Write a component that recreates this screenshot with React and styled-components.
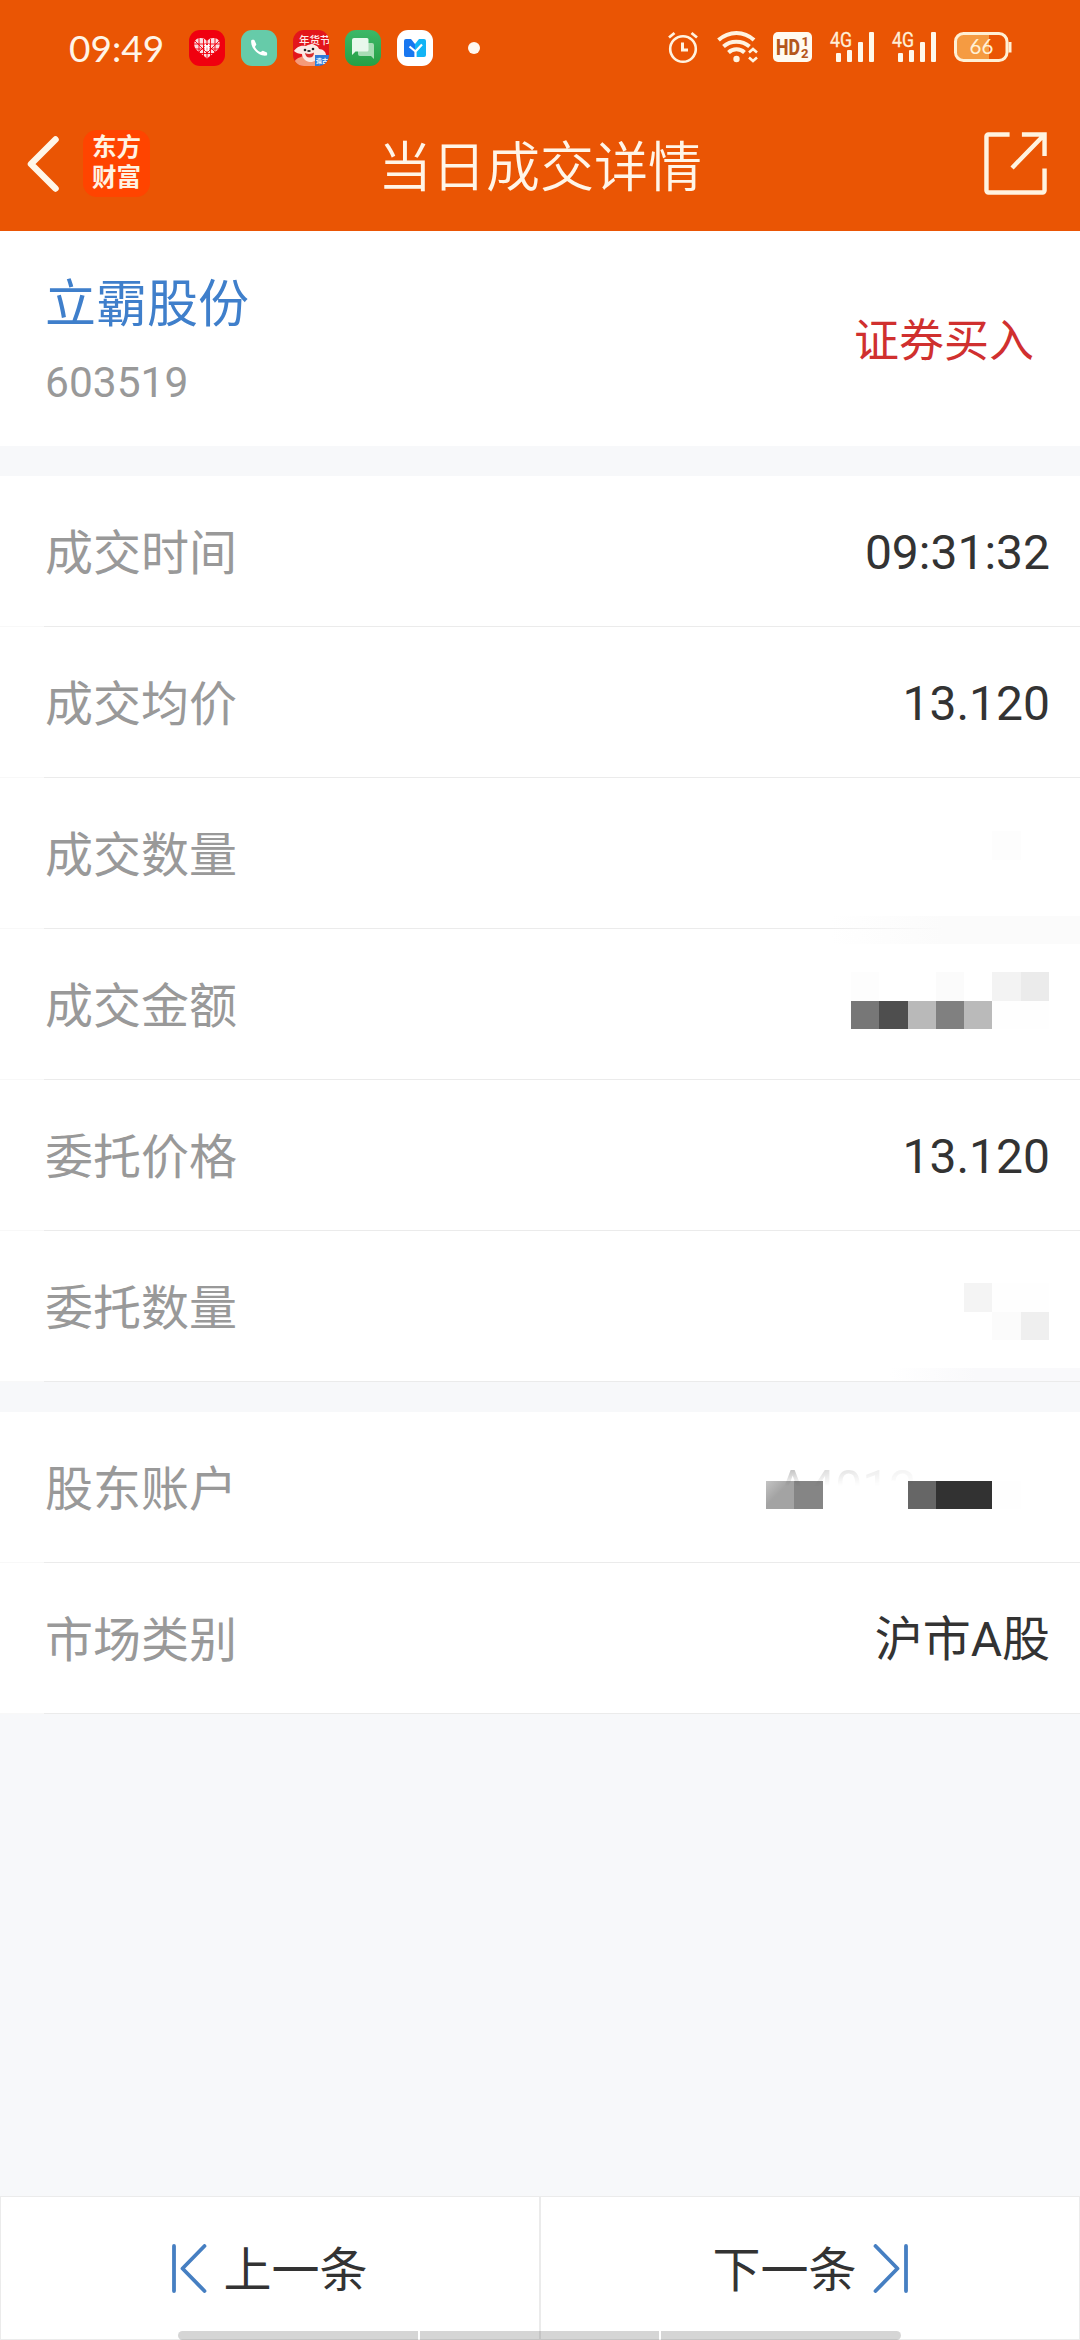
import styled, { createGlobalStyle } from 'styled-components';

const GlobalStyle = createGlobalStyle`
  * {
    box-sizing: border-box;
  }
  body {
    margin: 0;
    background: #f7f8fa;
    font-family: Roboto, 'Noto Sans CJK SC', sans-serif;
  }
`;

const Page = styled.div`
  position: relative;
  display: flex;
  flex-direction: column;
  width: 1080px;
  height: 2340px;
  overflow: hidden;
  background: #f7f8fa;
`;

const Header = styled.header`
  height: 231px;
  background: #ea5504;
  color: #fff5e8;
`;

const StatusBar = styled.div`
  display: flex;
  align-items: center;
  height: 96px;
  padding: 0 66px 0 69px;
`;

const Clock = styled.span`
  width: 120px;
  font-family: Lato, sans-serif;
  font-size: 37px;
  line-height: 40px;
  white-space: nowrap;
`;

const AppIcons = styled.div`
  display: flex;
  gap: 16px;
`;

const Dot = styled.span`
  width: 12px;
  height: 12px;
  margin-left: 35px;
  border-radius: 50%;
  background: #fff8f0;
`;

const Indicators = styled.div`
  display: flex;
  align-items: center;
  margin-left: auto;
`;

const Indicator = styled.svg`
  display: block;
  flex: none;
  margin-right: ${(p) => p.$gap || 0}px;
  overflow: visible;
`;

const NavBar = styled.div`
  display: grid;
  grid-template-columns: 200px 1fr 200px;
  align-items: center;
  height: 135px;
`;

const NavLeft = styled.div`
  display: flex;
  align-items: center;
  padding-left: 25px;
`;

const Logo = styled.div`
  display: flex;
  flex-direction: column;
  align-items: center;
  justify-content: center;
  width: 67px;
  height: 67px;
  margin-left: 22px;
  padding-bottom: 5px;
  border-radius: 14px;
  background: #ff4400;
  color: #fff3e3;
  font-family: 'Noto Sans CJK SC', sans-serif;
  font-size: 24.5px;
  font-weight: 700;
  line-height: 30px;
`;

const Title = styled.h1`
  margin: 11px 0 0;
  font-size: 54px;
  font-weight: 350;
  line-height: 64px;
  text-align: center;
`;

const NavRight = styled.div`
  display: flex;
  justify-content: flex-end;
  padding-right: 33px;
`;

const Stock = styled.section`
  display: flex;
  align-items: center;
  justify-content: space-between;
  height: 215px;
  margin-bottom: 30px;
  padding: 0 46px 0 45px;
  background: #fff;
`;

const StockInfo = styled.div`
  padding-top: 6px;
`;

const StockName = styled.div`
  color: #3f7fcb;
  font-size: 51px;
  line-height: 60px;
`;

const StockCode = styled.div`
  margin-top: 23px;
  color: #999;
  font-size: 42.5px;
  line-height: 50px;
`;

const Side = styled.div`
  padding-top: 6px;
  color: #d0302f;
  font-size: 45px;
  line-height: 54px;
`;

const List = styled.section`
  margin-bottom: 30px;
  background: #fff;
`;

const Row = styled.div`
  position: relative;
  display: flex;
  align-items: center;
  justify-content: space-between;
  height: 151px;
  padding: 2px 30px 0 45px;
  border-bottom: 1px solid;
  border-image: linear-gradient(to right, #f8f8f8 45px, #ebebeb 45px) 1;
  font-size: 48px;
  line-height: 60px;
`;

const Label = styled.span`
  padding-top: 4px;
  color: #999;
`;

const Value = styled.span`
  padding-top: 1px;
  color: #333;
`;

const Mosaic = styled.div`
  display: grid;
  grid-template-columns: repeat(${(p) => p.$cols}, 28.3px);
  grid-auto-rows: 28.5px;
  margin: 0 1px ${(p) => p.$lift || 0}px 0;
`;

const Tile = styled.i`
  background: ${(p) => p.$tone};
`;

// Размытые следы поверх строк
const Smudge = styled.div`
  position: absolute;
  right: 0;
  top: ${(p) => p.$top}px;
  width: ${(p) => p.$width}px;
  height: ${(p) => p.$height}px;
  background: linear-gradient(to right, transparent, ${(p) => p.$tone} 45%);
`;

const Ghost = styled.span`
  position: absolute;
  left: 777px;
  top: 46px;
  color: #333;
  -webkit-mask-image: linear-gradient(
    to bottom,
    rgba(0, 0, 0, 0.35) 12px,
    rgba(0, 0, 0, 0) 28px
  ), linear-gradient(to right, #000, rgba(0, 0, 0, 0.4) 40%, rgba(0, 0, 0, 0.15) 90%);
  -webkit-mask-composite: source-in;
  mask-composite: intersect;
`;

const Pager = styled.nav`
  display: grid;
  grid-template-columns: 1fr 1fr;
  height: 144px;
  margin-top: auto;
  background: #fff;
`;

const PagerButton = styled.button`
  display: flex;
  align-items: center;
  justify-content: center;
  gap: 16px;
  padding: 0;
  border: 1px solid #ebebeb;
  background: none;
  color: #333;
  font: inherit;
  font-size: 48px;
  line-height: 60px;
`;

const PagerText = styled.span`
  padding-top: 6px;
`;

const HomeBar = styled.div`
  position: absolute;
  left: 178px;
  bottom: 0;
  display: grid;
  grid-template-columns: 1fr 1fr 1fr;
  gap: 2px;
  width: 723px;
  height: 9px;
  border-radius: 5px;
  overflow: hidden;
`;

const HomeSegment = styled.span`
  background: rgba(0, 0, 0, 0.165);
`;

const hidden = {
  count: { cols: 2, lift: -11, tiles: ['#fdfdfd', '#fff', '#fff', '#fff'] },
  amount: {
    cols: 7,
    lift: 9,
    tiles: [
      '#fdfdfd', '#fff', '#fff', '#fbfbfb', '#fff', '#f3f3f3', '#ebebeb',
      '#777', '#4e4e4e', '#b9b9b9', '#808080', '#bababa', '#fefefe', '#fefefe',
    ],
  },
  orderCount: {
    cols: 3,
    lift: -9,
    tiles: ['#f4f4f4', '#fefefe', '#fefefe', '#fff', '#fbfbfb', '#efefef'],
  },
  account: {
    cols: 10,
    lift: -14,
    tiles: [
      'linear-gradient(135deg, #c4c4c4, #a3a3a3 45%)', '#858585', '#fff', '#fff', '#fff',
      '#666', '#323232', '#323232', '#fefefe', '#fff',
    ],
  },
};

const trade = [
  { label: '成交时间', value: '09:31:32' },
  { label: '成交均价', value: '13.120' },
  { label: '成交数量', mosaic: hidden.count },
  { label: '成交金额', mosaic: hidden.amount, smudge: { top: -13, width: 250, height: 28, tone: '#fbfbfb' } },
  { label: '委托价格', value: '13.120' },
  { label: '委托数量', mosaic: hidden.orderCount, smudge: { top: 137, width: 190, height: 13, tone: '#f9f9fb' } },
];

const account = [
  { label: '股东账户', mosaic: hidden.account, ghost: 'A4012' },
  { label: '市场类别', value: '沪市A股' },
];

function DetailRow({ label, value, mosaic, smudge, ghost }) {
  return (
    <Row>
      <Label>{label}</Label>
      {value && <Value>{value}</Value>}
      {mosaic && (
        <Mosaic $cols={mosaic.cols} $lift={mosaic.lift}>
          {mosaic.tiles.map((tone, index) => (
            <Tile key={index} $tone={tone} />
          ))}
        </Mosaic>
      )}
      {smudge && (
        <Smudge $top={smudge.top} $width={smudge.width} $height={smudge.height} $tone={smudge.tone} />
      )}
      {ghost && <Ghost>{ghost}</Ghost>}
    </Row>
  );
}

function AppIconSet() {
  return (
    <AppIcons>
      <svg width="36" height="36" viewBox="0 0 36 36">
        <rect width="36" height="36" rx="11" fill="#f0000f" />
        <path
          d="M18 28.5 7 19.5C3.500 14.500 5.500 8.500 10.500 8c3.500-.3 6 1 7.500 3.200C19.500 9 22 7.700 25.500 8c5 .5 7 6.500 3.500 11.500Z"
          fill="#fbdde0"
        />
        <path
          d="M5 14h26M6 19h24M11 23.500h14M10 8v15M14.500 9v17M18 11v3m0 7v7M21.500 9v17M26 8v15M6 11l12 12L30 11M10 22l8-8 8 8"
          stroke="#f0000f"
          strokeWidth="0.9"
          fill="none"
        />
        <path d="M15.500 16h5m-5 3h5m-4-5v7m3-7v7" stroke="#fff" strokeWidth="1" />
      </svg>
      <svg width="36" height="36" viewBox="0 0 36 36">
        <rect width="36" height="36" rx="11" fill="#66cba9" />
        <path
          d="M10.300 10.300c1-.6 2.700-.6 3.200 0l1.800 4c.2.800-1.400 2-1.300 2.600 1 2 3 4 5.300 5.200.7.200 1.800-1.500 2.600-1.300l4 1.800c.4.700.4 2.200-.2 3-7.400 1.500-17-7.700-15.400-15.300Z"
          fill="#fff"
        />
      </svg>
      <svg width="36" height="36" viewBox="0 0 36 36">
        <defs>
          <clipPath id="promo">
            <rect width="36" height="36" rx="11" />
          </clipPath>
        </defs>
        <g clipPath="url(#promo)">
          <rect width="36" height="36" fill="#e3161b" />
          <ellipse cx="14" cy="34" rx="13" ry="8" fill="#f59a78" />
          <path d="M1 21c3-5 8-6 12-5 5-3 12-1 13 3 4 0 7 3 7 6l-8 1c-1 4-4 6-8 6s-8-4-8-8c-3 0-6-1-8-3Z" fill="#fbe9e4" />
          <circle cx="12" cy="20" r="1.300" fill="#222" />
          <circle cx="20" cy="19" r="1.300" fill="#222" />
          <path d="M12 23c3 1.500 7 1 9-.5 0 3-1.500 5-4.500 5S12.500 25.500 12 23Z" fill="#d8302f" />
          <ellipse cx="16" cy="21" rx="1.800" ry="1.100" fill="#333" />
          <rect x="22" y="25" width="14" height="11" fill="#2f7bd8" />
          <text x="23" y="33" fontSize="6" fontWeight="700" fill="#fff" fontFamily="Noto Sans CJK SC">造古</text>
          <text x="6" y="14" fontSize="10.500" fontWeight="500" fill="#ffeceb" fontFamily="Noto Sans CJK SC">年货节</text>
        </g>
      </svg>
      <svg width="36" height="36" viewBox="0 0 36 36">
        <defs>
          <linearGradient id="chat" x1="0" y1="0" x2="0" y2="1">
            <stop offset="0" stopColor="#3cb868" />
            <stop offset="1" stopColor="#26a045" />
          </linearGradient>
        </defs>
        <rect width="36" height="36" rx="11" fill="url(#chat)" />
        <path d="M15 13h12a2 2 0 0 1 2 2v14l-3-3H15a2 2 0 0 1-2-2v-9a2 2 0 0 1 2-2Z" fill="#a8ddb5" />
        <path d="M9 8h13a1.500 1.500 0 0 1 1.500 1.500V20a1.500 1.500 0 0 1-1.500 1.500H10.500L7 25V10a2 2 0 0 1 2-2Z" fill="#e8f8ec" />
      </svg>
      <svg width="36" height="36" viewBox="0 0 36 36">
        <rect width="36" height="36" rx="11" fill="#fff" />
        <path d="M9 9h5l4 5v13H9a2 2 0 0 1-2-2V11a2 2 0 0 1 2-2Z" fill="#1877f0" />
        <path d="m18 14 4-5h5a2 2 0 0 1 2 2v14a2 2 0 0 1-2 2h-9Z" fill="#12b4f5" />
        <path d="m12.500 16.500 6 5M25 14.500l-6.500 7V28" stroke="#fff" strokeWidth="2.200" fill="none" />
      </svg>
    </AppIcons>
  );
}

function Signal() {
  return (
    <Indicator width="45" height="34" viewBox="0 0 45 34" $gap={17}>
      <text x="0" y="16" fontSize="19.500" fontFamily="Roboto" fill="#fff0d8" stroke="#fff0d8" strokeWidth=".3" textLength="22" lengthAdjust="spacingAndGlyphs">
        4G
      </text>
      <rect x="6" y="22" width="5" height="9" rx="1" fill="#fff8ea" />
      <rect x="17" y="19" width="5" height="12" rx="1" fill="#fff8ea" />
      <rect x="28" y="11" width="5" height="20" rx="1" fill="#fff8ea" />
      <rect x="39" y="1" width="5" height="30" rx="1" fill="#fff8ea" />
    </Indicator>
  );
}

function StatusIndicators() {
  return (
    <Indicators>
      <Indicator width="30" height="34" viewBox="0 0 30 34" $gap={19}>
        <circle cx="15" cy="18" r="12.800" fill="none" stroke="#fff3e0" strokeWidth="2.600" />
        <path d="M14.500 11.500V19H20" fill="none" stroke="#fff3e0" strokeWidth="3" />
        <path d="m1 6.500 5.500-4.500M29 6.500 23.500 2" stroke="#fff3e0" strokeWidth="2.800" />
      </Indicator>
      <Indicator width="42" height="34" viewBox="0 0 42 34" $gap={14}>
        <g fill="none" stroke="#fff3e0" strokeWidth="4">
          <path d="M1.500 9C12-.5 27-.5 37 9" />
          <path d="M6.500 15.500c7-6.500 18.500-6.500 26 0" />
          <path d="M11.500 21.500c4.500-4.300 11.500-4.300 16 0" />
          <path d="m32 21.500 4-3.500 4 3.500M32 26.500l4 3.500 4-3.500" strokeWidth="2.600" />
        </g>
        <circle cx="19.500" cy="28" r="3.200" fill="#fff3e0" />
      </Indicator>
      <Indicator width="40" height="34" viewBox="0 0 40 34" $gap={17}>
        <rect x="0" y="1" width="39" height="30" rx="5" fill="#fffaf0" />
        <text x="3" y="24" fontSize="22" fontWeight="800" fontFamily="Roboto" fill="#b4561c" textLength="24" lengthAdjust="spacingAndGlyphs">
          HD
        </text>
        <text x="28.500" y="15" fontSize="13" fontWeight="800" fontFamily="Roboto" fill="#b4561c">1</text>
        <text x="28" y="27" fontSize="13" fontWeight="800" fontFamily="Roboto" fill="#b4561c">2</text>
      </Indicator>
      <Signal />
      <Signal />
      <Indicator width="60" height="34" viewBox="0 0 60 34">
        <path d="M10 3h25v26H10a7 7 0 0 1-7-7V10a7 7 0 0 1 7-7Z" fill="#f59b42" />
        <rect x="1.500" y="2.500" width="51.500" height="27" rx="8" fill="none" stroke="#fff0d5" strokeWidth="3" />
        <path d="M56 11v10.500" stroke="#fff0d5" strokeWidth="3" />
        <text x="15.500" y="23" fontSize="20.500" fontFamily="Lato" fill="#fff0d5">66</text>
      </Indicator>
    </Indicators>
  );
}

export default function App() {
  return (
    <>
      <GlobalStyle />
      <Page>
        <Header>
          <StatusBar>
            <Clock>09:49</Clock>
            <AppIconSet />
            <Dot />
            <StatusIndicators />
          </StatusBar>
          <NavBar>
            <NavLeft>
              <svg width="36" height="60" viewBox="0 0 36 60">
                <path d="M30.500 5.500 6 30l24.500 24.500" fill="none" stroke="#fff6e8" strokeWidth="6.500" strokeLinecap="round" strokeLinejoin="round" />
              </svg>
              <Logo>
                <span>东方</span>
                <span>财富</span>
              </Logo>
            </NavLeft>
            <Title>当日成交详情</Title>
            <NavRight>
              <svg width="63" height="63" viewBox="0 0 64 64">
                <path
                  d="M26 2.500H4.500a2 2 0 0 0-2 2v55a2 2 0 0 0 2 2h55a2 2 0 0 0 2-2V37M38.500 2.500h23v22M61 3 28.500 36.500"
                  fill="none"
                  stroke="#fff3e0"
                  strokeWidth="4.500"
                />
              </svg>
            </NavRight>
          </NavBar>
        </Header>

        <Stock>
          <StockInfo>
            <StockName>立霸股份</StockName>
            <StockCode>603519</StockCode>
          </StockInfo>
          <Side>证券买入</Side>
        </Stock>

        <List>
          {trade.map((item) => (
            <DetailRow key={item.label} {...item} />
          ))}
        </List>
        <List>
          {account.map((item) => (
            <DetailRow key={item.label} {...item} />
          ))}
        </List>

        <Pager>
          <PagerButton>
            <svg width="35" height="49" viewBox="0 0 35 49">
              <path d="M2 2v45M32.500 2 10.500 24.500l22 22.500" fill="none" stroke="#467fc2" strokeWidth="3.800" strokeLinecap="round" strokeLinejoin="round" />
            </svg>
            <PagerText>上一条</PagerText>
          </PagerButton>
          <PagerButton>
            <PagerText>下一条</PagerText>
            <svg width="35" height="49" viewBox="0 0 35 49">
              <path d="M33 2v45M2.500 2l22 22.500L2.500 47" fill="none" stroke="#467fc2" strokeWidth="3.800" strokeLinecap="round" strokeLinejoin="round" />
            </svg>
          </PagerButton>
        </Pager>
        <HomeBar>
          <HomeSegment />
          <HomeSegment />
          <HomeSegment />
        </HomeBar>
      </Page>
    </>
  );
}
